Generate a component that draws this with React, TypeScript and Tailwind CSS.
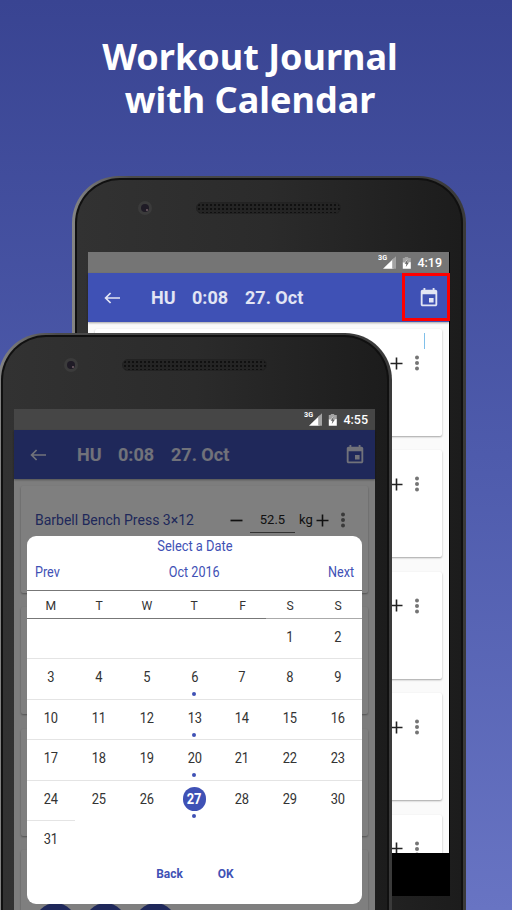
import type { ReactNode } from 'react';

function SignalIcon() {
  return (
    <svg className="block" width="31" height="14" viewBox="0 0 31 14">
      <path d="M13.6 2.4 3 12.7H13.6Z" fill="#fff" />
      <path d="M16 .2 12.2 3.8V12.7H16Z" fill="#a3a3a3" />
      <rect x="0" y="0" width="0" height="0" />
      <path d="M24.8 1H28.2V2H30.8V7H22.8V2H24.8Z" fill="#a3a3a3" />
      <path d="M22.8 6.5H25L27.6 2.8 27.3 6.3H30.8V12.7H22.8Z" fill="#fff" />
      <path d="M27.8 3 24.6 7.8H26.4L25.8 11 29 6.5H27.2Z" fill="#666" />
    </svg>
  );
}

function StatusBar({ time, className }: { time: string; className: string }) {
  return (
    <div className={`flex h-[21px] shrink-0 items-center justify-end pr-[7px] ${className}`}>
      <span className="-mr-[7px] mb-[9px] inline-block origin-right scale-x-90 text-[8px] leading-[8px] font-bold text-white">3G</span>
      <span className="mr-[6px]"><SignalIcon /></span>
      <span className="text-[12.5px] leading-[20px] font-medium text-white">{time}</span>
    </div>
  );
}

function Toolbar() {
  return (
    <div className="relative z-10 flex h-[49px] shrink-0 items-center bg-[#3f51b5] pl-4 text-[18px] leading-[24px] font-bold text-white/85 shadow-[0_1px_2px_rgba(0,0,0,0.35)]">
      <svg className="mr-[30px] shrink-0" width="17" height="14" viewBox="0 0 17 14" fill="none" stroke="currentColor" strokeWidth="1.7">
        <path d="M16 7H2M6.6 2 1.6 7 6.6 12" />
      </svg>
      <span className="w-[41px]">HU</span>
      <span className="w-[53px]">0:08</span>
      <span>27. Oct</span>
      <svg className="mr-[9px] ml-auto" width="22" height="22" viewBox="0 0 24 24" fill="currentColor">
        <path d="M17 12h-5v5h5v-5zM16 1v2H8V1H6v2H5c-1.11 0-1.99.9-1.99 2L3 19c0 1.1.89 2 2 2h14c1.1 0 2-.9 2-2V5c0-1.1-.9-2-2-2h-1V1h-2zm3 18H5V8h14v11z" />
      </svg>
    </div>
  );
}

function ExerciseCard({ cursor }: { cursor?: boolean }) {
  return (
    <div className="relative h-[107px] shrink-0 rounded-[2px] bg-white pt-[24px] shadow-[0_1px_2px_rgba(0,0,0,0.35)]">
      {cursor && <span className="absolute top-[4px] left-[329px] h-[16px] w-px bg-[#80c0ea]" />}
      <div className="flex h-5 items-center text-[#222]">
        <span className="ml-[14px] w-[195px] text-[14px] leading-5 whitespace-nowrap text-[#3f51b5]">Barbell Bench Press 3×12</span>
        <svg width="13" height="13" viewBox="0 0 13 13" stroke="currentColor" strokeWidth="1.7"><path d="M.5 6.5H12.5" /></svg>
        <span className="ml-[7px] flex h-[25px] w-[45px] items-center justify-center border-b border-[#666] text-[13px]">52.5</span>
        <span className="ml-1 w-[15px] text-[13px]">kg</span>
        <svg className="ml-[2px]" width="13" height="13" viewBox="0 0 13 13" stroke="currentColor" strokeWidth="1.6"><path d="M.5 6.5H12.5M6.5.5V12.5" /></svg>
        <svg className="ml-[11px]" width="6" height="16" viewBox="0 0 6 16" fill="#757575">
          <circle cx="3" cy="2.5" r="2" /><circle cx="3" cy="8" r="2" /><circle cx="3" cy="13.5" r="2" />
        </svg>
      </div>
      <div className="ml-[14px] flex gap-[9px] pt-[9px]">
        {[0, 1, 2].map((i) => <span key={i} className="size-[41px] rounded-full bg-[#3f51b5]" />)}
      </div>
    </div>
  );
}

function Phone({ className, children }: { className: string; children: ReactNode }) {
  return (
    <div className={`absolute w-[394px] overflow-hidden rounded-t-[47px] bg-linear-to-r from-[#858585] from-0% via-[#4a4a4a] via-15% to-[#3a3a3a] pt-[2px] pr-[3px] pl-[3px] ${className}`}>
      <div className="h-full rounded-t-[45px] bg-[#101010] px-[2px] pt-[2px]">
        <div className="flex h-full flex-col rounded-t-[43px] bg-linear-to-r from-[#323232] via-[#2b2b2b] to-[#1c1c1c] pr-[12px] pl-[11px]">
          <div className="flex h-[72px] shrink-0 items-start pt-[21px]">
            <span className="mt-[0px] ml-[50px] flex size-[14px] items-center justify-center rounded-full bg-[#3b3b3b]">
              <span className="flex size-[8px] items-center justify-center rounded-full bg-[#1f1b26]"><span className="mt-1 ml-1 size-[2px] rounded-full bg-[#756068]" /></span>
            </span>
            <span className="mt-px ml-[44px] h-[12px] w-[145px] rounded-full border border-[#222] bg-[#242424] bg-[radial-gradient(circle,#101010_1px,transparent_1.3px)] bg-size-[4px_4px]" />
          </div>
          {children}
        </div>
      </div>
    </div>
  );
}

const weekdays = ['M', 'T', 'W', 'T', 'F', 'S', 'S'];
const weeks: (number | null)[][] = [
  [null, null, null, null, null, 1, 2],
  [3, 4, 5, 6, 7, 8, 9],
  [10, 11, 12, 13, 14, 15, 16],
  [17, 18, 19, 20, 21, 22, 23],
  [24, 25, 26, 27, 28, 29, 30],
  [31, null, null, null, null, null, null],
];
const workoutDays = [6, 13, 20, 27];

function DayCell({ day, line }: { day: number | null; line: boolean }) {
  const selected = day === 27;
  return (
    <div className={`flex h-[40.4px] flex-col items-center border-b pt-[6px] ${line ? 'border-[#e4e4e4]' : 'border-transparent'}`}>
      <span className={`flex h-6 w-[23px] shrink-0 items-center justify-center rounded-full ${selected ? 'bg-[#3f51b5] font-bold text-white' : 'text-[#333]'}`}>
        <span className="inline-block scale-x-92 leading-6">{day}</span>
      </span>
      {day !== null && workoutDays.includes(day) && <span className="mt-[3px] size-[4px] shrink-0 rounded-full bg-[#3f51b5]" />}
    </div>
  );
}

function DateDialog() {
  return (
    <div className="absolute top-[126.5px] left-[13px] flex h-[368px] w-[335px] flex-col rounded-[9px] bg-white text-[14px] text-[#3f51b5]">
      <div className="flex h-[21px] items-center justify-center"><span className="inline-block scale-x-92">Select a Date</span></div>
      <div className="flex h-[34px] items-center justify-between border-b border-[#777] px-2 pb-px">
        <span className="inline-block w-[70px] origin-left scale-x-90">Prev</span>
        <span className="inline-block scale-x-90">Oct 2016</span>
        <span className="inline-block w-[70px] origin-right scale-x-90 text-right">Next</span>
      </div>
      <div className="grid h-[28.5px] grid-cols-7 text-[13.5px] text-[#333]">
        {weekdays.map((d, i) => (
          <span key={i} className={`flex items-center justify-center border-b pt-px ${i < 5 ? 'border-[#777]' : 'border-[#aaa]'}`}>
            <span className="inline-block scale-x-90">{d}</span>
          </span>
        ))}
      </div>
      <div className="grid grid-cols-7">
        {weeks.map((week, w) =>
          week.map((day, i) => <DayCell key={`${w}-${i}`} day={day} line={w < 4 || (w === 4 && i === 0)} />),
        )}
      </div>
      <div className="flex h-6 items-center justify-center gap-[32px] text-[13px] font-bold">
        <span className="inline-block w-[30px] scale-x-92">Back</span>
        <span className="inline-block w-[17px] scale-x-92">OK</span>
      </div>
    </div>
  );
}

export default function App() {
  return (
    <div className="relative h-[910px] w-[512px] overflow-hidden bg-linear-to-b from-[#394492] via-[#4e5bac] to-[#6874c3] font-[Roboto,sans-serif]">
      <h1 className="pt-[35px] pr-[12px] text-center font-['Noto_Sans','Open_Sans',sans-serif] text-[36px] leading-[43px] font-bold text-white">
        Workout Journal<br />with Calendar
      </h1>

      <Phone className="top-[176px] left-[72px] h-[760px]">
        <div className="relative -mr-px flex h-[644px] shrink-0 flex-col bg-black pr-px">
          <StatusBar time="4:19" className="bg-[#757575]" />
          <Toolbar />
          <div className="flex h-[531px] shrink-0 flex-col gap-[14.4px] overflow-hidden bg-[#fafafa] px-[7px] pt-[7px]">
            <ExerciseCard cursor />
            <ExerciseCard />
            <ExerciseCard />
            <ExerciseCard />
            <ExerciseCard />
          </div>
          <div className="absolute top-[21px] right-0 z-20 h-[48px] w-[48px] border-[3px] border-[#f00]" />
        </div>
      </Phone>

      <Phone className="top-[333px] -left-[2px] h-[620px]">
        <div className="relative flex h-[540px] shrink-0 flex-col">
          <StatusBar time="4:55" className="bg-[#464646]" />
          <Toolbar />
          <div className="flex h-[470px] shrink-0 flex-col gap-[14.4px] overflow-hidden bg-[#fafafa] px-[7px] pt-[7px]">
            <ExerciseCard />
            <ExerciseCard />
            <ExerciseCard />
            <ExerciseCard />
          </div>
          <div className="absolute inset-x-0 top-[21px] bottom-0 z-20 bg-black/50" />
          <div className="absolute inset-0 z-30"><DateDialog /></div>
        </div>
      </Phone>
    </div>
  );
}
